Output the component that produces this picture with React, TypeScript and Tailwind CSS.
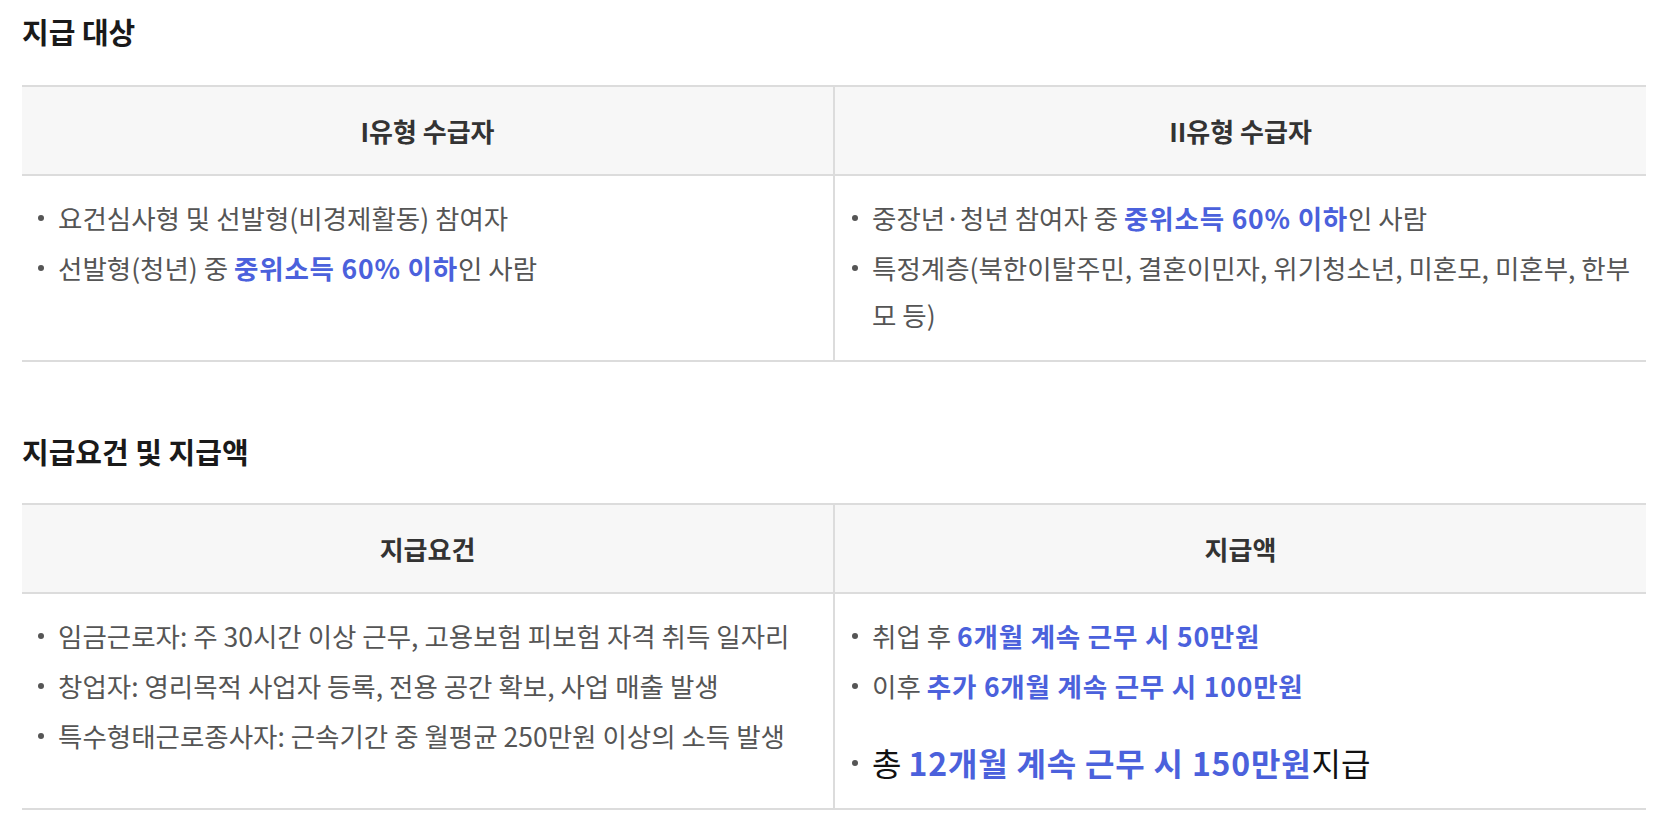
import { ReactNode } from "react";

const BLUE = "text-[#4b61dc] font-semibold tracking-[0.8px]";

function Item({ children, big }: { children: ReactNode; big?: boolean }) {
  return (
    <li className={big ? "flex mt-[30px] text-[32px] text-[#111]" : "flex mt-[3px] first:mt-0"}>
      <span className="w-[26px] h-[47px] shrink-0 flex items-center">
        <span className="ml-[6px] size-[6px] rounded-full bg-[#555]" />
      </span>
      <span>{children}</span>
    </li>
  );
}

function Table({ heads, left, right }: { heads: [string, string]; left: ReactNode; right: ReactNode }) {
  return (
    <table className="w-full table-fixed border-collapse border-y-2 border-[#dcdcdc]">
      <thead>
        <tr className="bg-[#f7f7f7] h-[89px] border-b-2 border-[#dcdcdc]">
          <th className="border-r-2 border-[#dcdcdc] text-[26px] font-semibold text-[#333]">{heads[0]}</th>
          <th className="text-[26px] font-semibold text-[#333]">{heads[1]}</th>
        </tr>
      </thead>
      <tbody>
        <tr>
          <td className="align-top border-r-2 border-[#dcdcdc] pl-[10px] pr-[10px] pt-[18px] pb-[22px]">
            <ul className="text-[26.5px] leading-[47px] text-[#555]">{left}</ul>
          </td>
          <td className="align-top pl-[11px] pr-[8px] pt-[18px] pb-[22px]">
            <ul className="text-[26.5px] leading-[47px] text-[#555]">{right}</ul>
          </td>
        </tr>
      </tbody>
    </table>
  );
}

export default function App() {
  return (
    <div
      className="px-[22px] pt-[13px] bg-white min-h-screen"
      style={{ fontFamily: '"Noto Sans CJK KR", "Noto Sans", sans-serif' }}
    >
      <h2 className="text-[29px] leading-[36px] font-bold text-[#1a1a1a] mb-[36px]">지급 대상</h2>
      <Table
        heads={["I유형 수급자", "II유형 수급자"]}
        left={
          <>
            <Item>요건심사형 및 선발형(비경제활동) 참여자</Item>
            <Item>
              선발형(청년) 중 <b className={BLUE}>중위소득 60% 이하</b>인 사람
            </Item>
          </>
        }
        right={
          <>
            <Item>
              중장년·청년 참여자 중 <b className={BLUE}>중위소득 60% 이하</b>인 사람
            </Item>
            <Item>특정계층(북한이탈주민, 결혼이민자, 위기청소년, 미혼모, 미혼부, 한부모 등)</Item>
          </>
        }
      />
      <h2 className="mt-[71px] text-[29px] leading-[36px] font-bold text-[#1a1a1a] mb-[34px]">
        지급요건 및 지급액
      </h2>
      <Table
        heads={["지급요건", "지급액"]}
        left={
          <>
            <Item>임금근로자: 주 30시간 이상 근무, 고용보험 피보험 자격 취득 일자리</Item>
            <Item>창업자: 영리목적 사업자 등록, 전용 공간 확보, 사업 매출 발생</Item>
            <Item>특수형태근로종사자: 근속기간 중 월평균 250만원 이상의 소득 발생</Item>
          </>
        }
        right={
          <>
            <Item>
              취업 후 <b className={BLUE}>6개월 계속 근무 시 50만원</b>
            </Item>
            <Item>
              이후 <b className={BLUE}>추가 6개월 계속 근무 시 100만원</b>
            </Item>
            <Item big>
              총 <b className={BLUE}>12개월 계속 근무 시 150만원</b>지급
            </Item>
          </>
        }
      />
    </div>
  );
}
